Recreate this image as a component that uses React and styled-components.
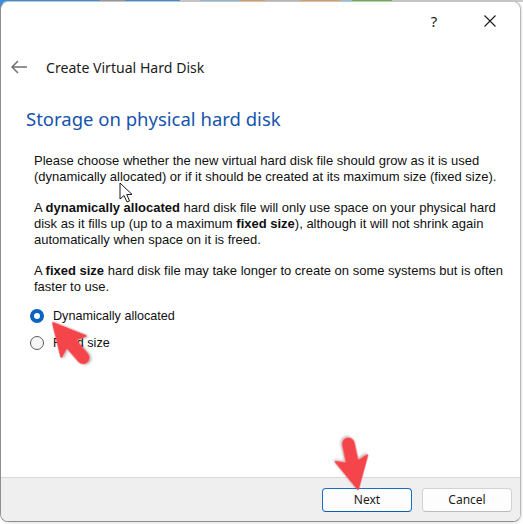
import React from "react";
import styled, { createGlobalStyle } from "styled-components";

const Global = createGlobalStyle`
  html, body { margin: 0; padding: 0; }
  body {
    width: 523px;
    height: 524px;
    overflow: hidden;
    background:
      linear-gradient(to right, #3d8fd8 0 100px, #9a9a9a 100px 125px, #3d8fd8 125px 180px, #c9c9c9 180px 200px, #8fb8d8 200px 240px, #d9a25a 240px 265px, #b8b8b8 265px 300px, #d9a25a 300px 340px, #8fc0e0 340px 352px, #6bb54a 352px 392px, #c9c9c9 392px) top / 100% 2px no-repeat,
      linear-gradient(to bottom, #3d8fd8 0 14px, #ffffff 14px) left / 6px 100% no-repeat,
      #ffffff;
  }
  #root { position: relative; }
`;

const Stage = styled.div`
  position: relative;
  width: 523px;
  height: 524px;
`;

const Window = styled.div`
  box-sizing: border-box;
  margin-top: 1px;
  width: 521px;
  height: 521px;
  background: #ffffff;
  border: 1px solid #8f8f8f;
  border-right-color: #b9b9b9;
  border-top-color: #c4c4c4;
  border-radius: 8px;
  box-shadow: 1px 1px 3px rgba(0, 0, 0, 0.12);
  display: flex;
  flex-direction: column;
  overflow: hidden;
  font-family: "Noto Sans", "Liberation Sans", sans-serif;
  color: #1a1a1a;
`;

const TitleBar = styled.div`
  height: 38px;
  display: flex;
  justify-content: flex-end;
  align-items: center;
  padding-right: 7px;
  gap: 10px;
`;

const TitleButton = styled.div`
  width: 46px;
  height: 38px;
  display: flex;
  align-items: center;
  justify-content: center;
  font-size: 15px;
  color: #1b1b1b;
`;

const Header = styled.div`
  margin-top: 11px;
  height: 32px;
  display: flex;
  align-items: center;
  padding-left: 10px;
  gap: 18px;
`;

const HeaderTitle = styled.div`
  font-size: 14.1px;
  color: #1b1b1b;
`;

const Content = styled.div`
  padding-left: 25px;
  flex: 1;
`;

const PageTitle = styled.h1`
  margin: 24px 0 0;
  font-size: 18.5px;
  line-height: 24px;
  font-weight: 400;
  color: #1553ac;
`;

const Body = styled.div`
  margin-left: 8px;
  font-family: "Liberation Sans", Arial, sans-serif;
  font-size: 13px;
  line-height: 16px;
  color: #101010;
`;

const Para = styled.p`
  margin: ${(p) => (p.$first ? "22px" : "15px")} 0 0;
  white-space: nowrap;
`;

const RadioGroup = styled.div`
  margin-top: 11px;
  margin-left: 4px;
  display: flex;
  flex-direction: column;
  gap: 7px;
`;

const RadioRow = styled.label`
  height: 20px;
  display: flex;
  align-items: center;
  gap: 9px;
  font-family: "Liberation Sans", Arial, sans-serif;
  font-size: 12.6px;
  color: #101010;
`;

const RadioDot = styled.span`
  box-sizing: border-box;
  width: 14px;
  height: 14px;
  border-radius: 50%;
  background: ${(p) => (p.$checked ? "#ffffff" : "#f6f6f6")};
  border: ${(p) => (p.$checked ? "4px solid #0a64c0" : "1px solid #5c5c5c")};
`;

const Footer = styled.div`
  height: 43px;
  border-top: 1px solid #d9d9d9;
  background: #efefef;
  display: flex;
  justify-content: flex-end;
  align-items: center;
  gap: 10px;
  padding-right: 8px;
`;

const Button = styled.button`
  box-sizing: border-box;
  width: 90px;
  height: 24px;
  border-radius: 4px;
  background: #fdfdfd;
  border: 1px solid ${(p) => (p.$primary ? "#1b6fc4" : "#d3d3d3")};
  border-bottom-color: ${(p) => (p.$primary ? "#0a5fb4" : "#bdbdbd")};
  font-family: "Noto Sans", "Liberation Sans", sans-serif;
  font-size: 12px;
  color: #1b1b1b;
  padding: 0;
`;

const Overlay = styled.svg`
  position: absolute;
  left: 0;
  top: 0;
  width: 523px;
  height: 524px;
  pointer-events: none;
`;

const arrowPath =
  "M0,0 L16,31 L5.5,27 L5.5,46 A5.5,5.5 0 0 1 -5.5,46 L-5.5,27 L-16,31 Z";

export default function App() {
  return (
    <Stage>
      <Global />
      <Window>
        <TitleBar>
          <TitleButton>?</TitleButton>
          <TitleButton>
            <svg width="12" height="12" viewBox="0 0 12 12">
              <path d="M0.5 0.5 L11.5 11.5 M11.5 0.5 L0.5 11.5" stroke="#1b1b1b" strokeWidth="1.1" />
            </svg>
          </TitleButton>
        </TitleBar>
        <Header>
          <svg width="17" height="14" viewBox="0 0 17 14">
            <path d="M1 7 H16 M7 1 L1 7 L7 13" fill="none" stroke="#6f6f6f" strokeWidth="1.5" />
          </svg>
          <HeaderTitle>Create Virtual Hard Disk</HeaderTitle>
        </Header>
        <Content>
          <PageTitle>Storage on physical hard disk</PageTitle>
          <Body>
            <Para $first>
              Please choose whether the new virtual hard disk file should grow as it is used
              <br />
              (dynamically allocated) or if it should be created at its maximum size (fixed size).
            </Para>
            <Para>
              A <b>dynamically allocated</b> hard disk file will only use space on your physical hard
              <br />
              disk as it fills up (up to a maximum <b>fixed size</b>), although it will not shrink again
              <br />
              automatically when space on it is freed.
            </Para>
            <Para>
              A <b>fixed size</b> hard disk file may take longer to create on some systems but is often
              <br />
              faster to use.
            </Para>
          </Body>
          <RadioGroup>
            <RadioRow>
              <RadioDot $checked />
              Dynamically allocated
            </RadioRow>
            <RadioRow>
              <RadioDot />
              Fixed size
            </RadioRow>
          </RadioGroup>
        </Content>
        <Footer>
          <Button $primary>Next</Button>
          <Button>Cancel</Button>
        </Footer>
      </Window>
      <Overlay viewBox="0 0 523 524">
        <defs>
          <filter id="sh" x="-50%" y="-50%" width="200%" height="200%">
            <feDropShadow dx="1" dy="1.5" stdDeviation="1.2" floodColor="#000" floodOpacity="0.3" />
          </filter>
        </defs>
        <path
          d="M120 182 L120 198 L124 194.5 L127 201 L129.5 200 L126.8 193.6 L132 193.4 Z"
          fill="#ffffff"
          stroke="#000"
          strokeWidth="0.9"
          strokeLinejoin="round"
        />
        <g transform="translate(53 322) rotate(-41)" filter="url(#sh)">
          <path d={arrowPath} fill="#f4444b" stroke="#f4444b" strokeWidth="2" strokeLinejoin="round" />
        </g>
        <g transform="translate(358 488) rotate(168)" filter="url(#sh)">
          <path d={arrowPath} fill="#f4444b" stroke="#f4444b" strokeWidth="2" strokeLinejoin="round" />
        </g>
      </Overlay>
    </Stage>
  );
}
